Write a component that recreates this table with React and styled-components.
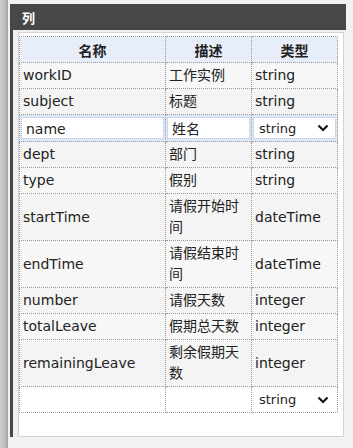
import React from 'react'
import styled, { createGlobalStyle } from 'styled-components'

const Global = createGlobalStyle`
  html, body {
    margin: 0;
    padding: 0;
    background: #f2f2f2;
    font-family: "DejaVu Sans", "Noto Sans CJK SC", sans-serif;
    font-size: 14px;
    color: #222;
  }
`

const Page = styled.div`
  display: flex;
  height: 448px;
  padding-top: 4px;
  box-sizing: border-box;
  background: #f2f2f2;
  border-top: 0;
`

const SideStrip = styled.div`
  width: 8px;
  margin-top: -4px;
  background: linear-gradient(to right, #cfcfcf, #b9b9b9 70%, #9d9d9d);
  margin-right: 2px;
`

const Main = styled.div`
  width: 336px;
  display: flex;
  flex-direction: column;
`

const Header = styled.div`
  height: 26px;
  background: #474747;
  color: #fff;
  font-weight: bold;
  font-size: 13px;
  display: flex;
  align-items: center;
  padding-left: 12px;
`

const Body = styled.div`
  display: flex;
  height: 405px;
  border-left: 3px solid #474747;
  padding: 2px 4px 0 5px;
  background: #f0f0f0;
`

const Panel = styled.div`
  flex: 1;
  background: #fff;
  border: 1px solid #d4d4d4;
  padding: 3px 5px 0 0;
`

const Table = styled.table`
  border-collapse: collapse;
  width: 318px;
  table-layout: fixed;
`

const Th = styled.th`
  background: #e8eef9;
  border: 1px dotted #9a9a9a;
  height: 25px;
  font-weight: bold;
  font-size: 14px;
  padding: 0;
  text-align: center;
`

const Td = styled.td`
  border: 1px dotted #9a9a9a;
  background: ${p => (p.$tone === 'alt' ? '#f4f4f4' : p.$tone === 'blank' ? '#fff' : '#f7f7f7')};
  padding: 2px 3px;
  line-height: 21px;
  height: ${p => (p.$tall ? '42px' : '21px')};
  vertical-align: middle;
  word-break: break-all;
`

const EditCell = styled.td`
  border: 1px dotted #9a9a9a;
  background: #dde7f6;
  padding: 1px;
  height: 24px;
`

const TextBox = styled.div`
  background: #fff;
  border: 1px solid #c9d8ee;
  height: 22px;
  line-height: 22px;
  padding-left: 4px;
  box-sizing: border-box;
  overflow: hidden;
  white-space: nowrap;
`

const SelectBox = styled.div`
  background: #fff;
  border: 1px solid ${p => (p.$plain ? '#fff' : '#c9d8ee')};
  height: 22px;
  display: flex;
  align-items: center;
  justify-content: space-between;
  padding: 0 6px 0 5px;
  box-sizing: border-box;
  font-size: 13px;
`

const Chevron = () => (
  <svg width="12" height="8" viewBox="0 0 12 8">
    <path d="M1.5 1.5 L6 6 L10.5 1.5" fill="none" stroke="#111" strokeWidth="2.2" />
  </svg>
)

const rows = [
  ['workID', '工作实例', 'string'],
  ['subject', '标题', 'string'],
  null,
  ['dept', '部门', 'string'],
  ['type', '假别', 'string'],
  ['startTime', '请假开始时间', 'dateTime', true],
  ['endTime', '请假结束时间', 'dateTime', true],
  ['number', '请假天数', 'integer'],
  ['totalLeave', '假期总天数', 'integer'],
  ['remainingLeave', '剩余假期天数', 'integer', true],
]

export default function App() {
  return (
    <>
      <Global />
      <Page>
        <SideStrip />
        <Main>
          <Header>列</Header>
          <Body>
            <Panel>
              <Table>
                <colgroup>
                  <col style={{ width: 146 }} />
                  <col style={{ width: 86 }} />
                  <col style={{ width: 86 }} />
                </colgroup>
                <thead>
                  <tr>
                    <Th>名称</Th>
                    <Th>描述</Th>
                    <Th>类型</Th>
                  </tr>
                </thead>
                <tbody>
                  {rows.map((r, i) =>
                    r ? (
                      <tr key={i}>
                        <Td $tone={i % 2 ? 'alt' : ''} $tall={r[3]}>{r[0]}</Td>
                        <Td $tone={i % 2 ? 'alt' : ''} $tall={r[3]}>{r[1]}</Td>
                        <Td $tone={i % 2 ? 'alt' : ''} $tall={r[3]}>{r[2]}</Td>
                      </tr>
                    ) : (
                      <tr key={i}>
                        <EditCell><TextBox>name</TextBox></EditCell>
                        <EditCell><TextBox>姓名</TextBox></EditCell>
                        <EditCell>
                          <SelectBox>string<Chevron /></SelectBox>
                        </EditCell>
                      </tr>
                    )
                  )}
                  <tr>
                    <Td $tone="blank" />
                    <Td $tone="blank" />
                    <Td $tone="blank" style={{ padding: 1 }}>
                      <SelectBox $plain>string<Chevron /></SelectBox>
                    </Td>
                  </tr>
                </tbody>
              </Table>
            </Panel>
          </Body>
        </Main>
      </Page>
    </>
  )
}
